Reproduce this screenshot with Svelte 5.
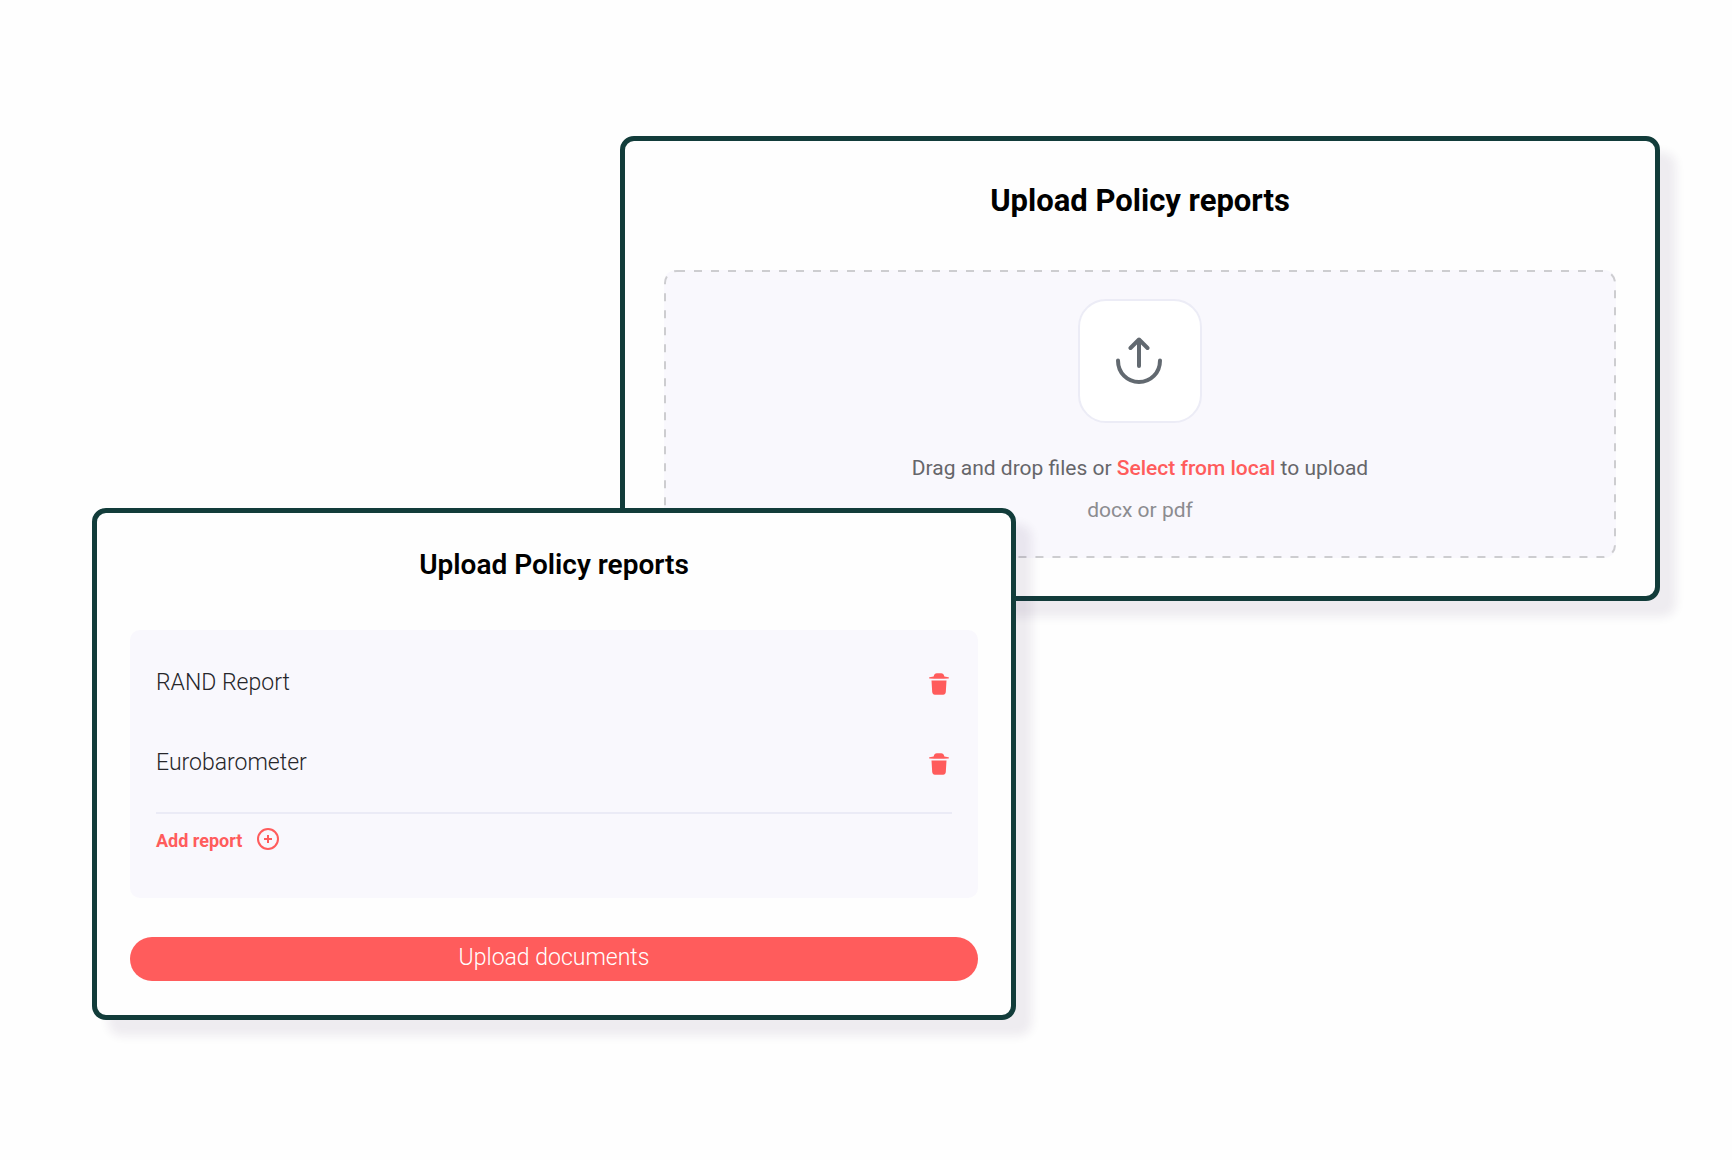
<script>
  let reports = $state(['RAND Report', 'Eurobarometer']);

  function remove(index) {
    reports.splice(index, 1);
  }
</script>

<main class="stage">
  <section class="card drop-card">
    <h2>Upload Policy reports</h2>
    <div class="dropzone">
      <svg class="outline" aria-hidden="true"><rect /></svg>
      <div class="tile">
        <svg viewBox="0 0 48 48" aria-hidden="true">
          <path d="M23 29V2.500M14.500 11l8.500-8.500L31.500 11M2 23.500c0 12.500 9.400 21.500 21 21.500s21-9 21-21.500" />
        </svg>
      </div>
      <p class="hint">Drag and drop files or <a href="#select">Select from local</a> to upload</p>
      <p class="formats">docx or pdf</p>
    </div>
  </section>

  <section class="card list-card">
    <h2>Upload Policy reports</h2>
    <div class="panel">
      <ul>
        {#each reports as report, i}
          <li>
            <span>{report}</span>
            <button class="remove" aria-label="Remove {report}" onclick={() => remove(i)}>
              <svg viewBox="0 0 20 22" aria-hidden="true">
                <path d="M4.600 3.600C5.200 1.400 6.200.3 7.800.3h4.400c1.600 0 2.600 1.100 3.200 3.300l4 .6c.8.300.8 1.100 0 1.300-6 .4-12.800.4-18.800 0-.8-.2-.8-1 0-1.300zM2.500 7.400h15l-.7 11.700c-.1 1.600-1.200 2.700-2.700 2.700H5.900c-1.500 0-2.600-1.100-2.700-2.700z" />
              </svg>
            </button>
          </li>
        {/each}
      </ul>
      <button class="add">
        <span>Add report</span>
        <svg viewBox="0 0 22 22" aria-hidden="true">
          <path d="M11 7v8M7 11h8" />
          <circle cx="11" cy="11" r="10" />
        </svg>
      </button>
    </div>
    <button class="submit">Upload documents</button>
  </section>
</main>

<style>
  :global(body) {
    margin: 0;
    background: #fefefe;
  }

  .stage {
    display: grid;
    grid-template-columns: 528fr 396fr 644fr;
    align-items: start;
    box-sizing: border-box;
    min-height: 100vh;
    padding: 136px 72px 136px 92px;
    font-family: Roboto, 'Liberation Sans', sans-serif;
  }

  .card {
    grid-row: 1;
    box-sizing: border-box;
    border: 5px solid #123c3a;
    border-radius: 14px;
    background: #fefefe;
    box-shadow: 16px 16px 10px rgba(50, 30, 80, 0.08);
  }

  .drop-card {
    grid-column: 2 / 4;
    padding: 40px 39px 38px;
  }

  .list-card {
    grid-column: 1 / 3;
    margin-top: 372px;
    padding: 32px 33px 34px;
    z-index: 1;
  }

  h2 {
    margin: 0;
    color: #000;
    font-size: 31px;
    font-weight: 700;
    line-height: 40px;
    text-align: center;
  }

  .list-card h2 {
    font-size: 28px;
    font-weight: 600;
  }

  .dropzone {
    position: relative;
    display: flex;
    flex-direction: column;
    align-items: center;
    margin-top: 49px;
    padding: 29px 0 32px;
    border-radius: 12px;
    background: #f9f8fd;
  }

  .outline {
    position: absolute;
    inset: 0;
    width: 100%;
    height: 100%;
  }

  .outline rect {
    x: 1px;
    y: 1px;
    width: calc(100% - 2px);
    height: calc(100% - 2px);
    rx: 12px;
    fill: none;
    stroke: #cdcdd0;
    stroke-width: 2;
    stroke-dasharray: 8 9;
  }

  .tile {
    display: grid;
    place-items: center;
    box-sizing: border-box;
    width: 124px;
    height: 124px;
    border: 2px solid #ececf6;
    border-radius: 28px;
    background: #fff;
  }

  .tile svg {
    width: 48px;
    height: 48px;
    fill: none;
    stroke: #626970;
    stroke-width: 4;
    stroke-linecap: round;
    stroke-linejoin: round;
  }

  p {
    position: relative;
    margin: 0;
    font-size: 21px;
    line-height: 32px;
  }

  .hint {
    margin-top: 29px;
    color: #66666a;
  }

  .hint a {
    color: #ff5c5c;
    font-weight: 500;
    text-decoration: none;
  }

  .formats {
    margin-top: 10px;
    color: #8c8c90;
  }

  .panel {
    margin-top: 45px;
    padding: 12px 26px 43px;
    border-radius: 10px;
    background: #f9f8fd;
  }

  ul {
    margin: 0;
    padding: 0 0 10px;
    border-bottom: 2px solid #ebebf6;
    list-style: none;
  }

  li {
    display: flex;
    align-items: center;
    justify-content: space-between;
    height: 80px;
    color: #26262a;
    font-size: 23px;
    font-weight: 300;
  }

  button {
    border: 0;
    font-family: inherit;
    cursor: pointer;
  }

  .remove {
    display: flex;
    padding: 4px 3px 0;
    background: none;
  }

  .remove svg {
    width: 20px;
    height: 22px;
    fill: #ff5c5c;
  }

  .add {
    display: flex;
    align-items: center;
    gap: 15px;
    margin-top: 13px;
    padding: 0;
    background: none;
    color: #ff5c5c;
    font-size: 18px;
    font-weight: 700;
    line-height: 28px;
  }

  .add svg {
    width: 22px;
    height: 22px;
    margin-bottom: 4px;
    fill: none;
    stroke: currentColor;
    stroke-width: 2;
  }

  .submit {
    display: block;
    width: 100%;
    height: 44px;
    margin-top: 39px;
    padding: 0 0 4px;
    border-radius: 22px;
    background: #ff5c5c;
    color: #fff;
    font-size: 23px;
    font-weight: 300;
  }
</style>
